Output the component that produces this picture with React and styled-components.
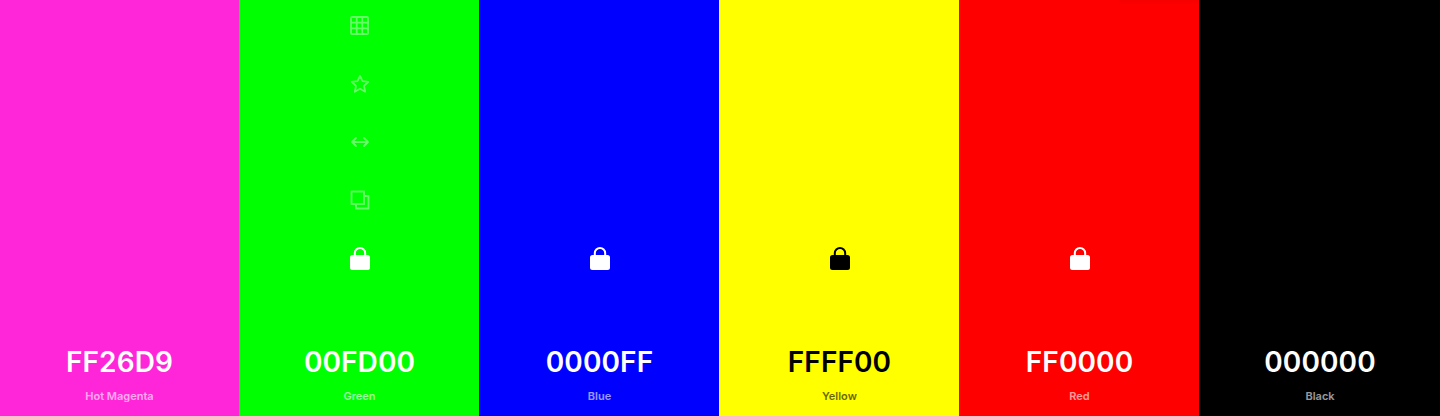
import React from "react";
import styled, { createGlobalStyle } from "styled-components";

const GlobalStyle = createGlobalStyle`
  html, body {
    margin: 0;
    padding: 0;
    background: #000;
    font-family: Inter, "Liberation Sans", sans-serif;
  }
`;

const Palette = styled.div`
  display: grid;
  grid-template-columns: 239px repeat(4, 240px) 241px;
  width: 1440px;
  height: 416px;
  overflow: hidden;
`;

const Swatch = styled.div`
  position: relative;
  display: flex;
  flex-direction: column;
  align-items: center;
  background: ${({ $bg }) => $bg};
  color: ${({ $fg }) => $fg};

  &:not(:first-child) {
    padding-left: 1px;
  }
`;

const Tools = styled.div`
  display: flex;
  flex-direction: column;
  align-items: center;
  justify-content: flex-end;
  height: 288px;
`;

const Tool = styled.div`
  flex: none;
  display: flex;
  align-items: center;
  justify-content: center;
  width: 40px;
  height: 58.4px;
  opacity: ${({ $active }) => ($active ? 1 : 0.4)};

  svg {
    display: block;
  }
`;

const Code = styled.div`
  margin-top: 57px;
  font-size: 28px;
  line-height: 34px;
  font-weight: 600;
  letter-spacing: 0.1px;
`;

const Name = styled.div`
  margin-top: 10px;
  font-size: 11px;
  line-height: 14px;
  font-weight: 600;
  opacity: 0.6;
`;

const TopShade = styled.div`
  position: absolute;
  top: 0;
  right: 0;
  width: 80px;
  height: 5px;
  background: linear-gradient(rgba(0, 0, 0, 0.04), rgba(0, 0, 0, 0));
`;

const GridIcon = () => (
  <svg width="19" height="19" viewBox="0 0 19 19" fill="none" stroke="currentColor" strokeWidth="1.8">
    <rect x="1" y="1" width="17" height="17" rx="1" />
    <path d="M6.700 1v17M12.300 1v17M1 6.700h17M1 12.300h17" />
  </svg>
);

const StarIcon = () => (
  <svg width="20" height="20" viewBox="0 0 20 20" fill="none" stroke="currentColor" strokeWidth="1.8" strokeLinejoin="round">
    <path d="M10 1.800l2.500 5.400 5.800.7-4.300 4 1.200 5.800L10 14.800l-5.200 2.900L6 11.900l-4.300-4 5.800-.7z" />
  </svg>
);

const ArrowsIcon = () => (
  <svg width="20" height="20" viewBox="0 0 20 20" fill="none" stroke="currentColor" strokeWidth="1.8" strokeLinecap="round" strokeLinejoin="round">
    <path d="M2 10h16M6 6L2 10l4 4M14 6l4 4-4 4" />
  </svg>
);

const CopyIcon = () => (
  <svg width="20" height="20" viewBox="0 0 20 20" fill="none" stroke="currentColor" strokeWidth="1.8">
    <rect x="1.500" y="1.500" width="12.500" height="12.500" />
    <path d="M14 6h4.500v12.500H6V14" />
  </svg>
);

const LockIcon = () => (
  <svg width="20" height="23" viewBox="0 0 20 23" fill="currentColor">
    <path d="M2.500 8h15a2.500 2.500 0 0 1 2.500 2.500v10a2.500 2.500 0 0 1-2.500 2.500h-15A2.500 2.500 0 0 1 0 20.500v-10A2.500 2.500 0 0 1 2.500 8z" />
    <path d="M4.800 9V6.200a5.200 5.200 0 0 1 10.400 0V9" fill="none" stroke="currentColor" strokeWidth="2" />
  </svg>
);

const swatches = [
  { code: "FF26D9", name: "Hot Magenta", bg: "#ff26d9", fg: "#fff" },
  { code: "00FD00", name: "Green", bg: "#00ff00", fg: "#fff", hovered: true, locked: true },
  { code: "0000FF", name: "Blue", bg: "#0000ff", fg: "#fff", locked: true },
  { code: "FFFF00", name: "Yellow", bg: "#ffff00", fg: "#000", locked: true },
  { code: "FF0000", name: "Red", bg: "#ff0000", fg: "#fff", locked: true, shaded: true },
  { code: "000000", name: "Black", bg: "#000000", fg: "#fff" },
];

const App = () => (
  <>
    <GlobalStyle />
    <Palette>
      {swatches.map((s) => (
        <Swatch key={s.code} $bg={s.bg} $fg={s.fg}>
          {s.shaded && <TopShade />}
          <Tools>
            {s.hovered && (
              <>
                <Tool><GridIcon /></Tool>
                <Tool><StarIcon /></Tool>
                <Tool><ArrowsIcon /></Tool>
                <Tool><CopyIcon /></Tool>
              </>
            )}
            {s.locked && <Tool $active><LockIcon /></Tool>}
          </Tools>
          <Code>{s.code}</Code>
          <Name>{s.name}</Name>
        </Swatch>
      ))}
    </Palette>
  </>
);

export default App;
